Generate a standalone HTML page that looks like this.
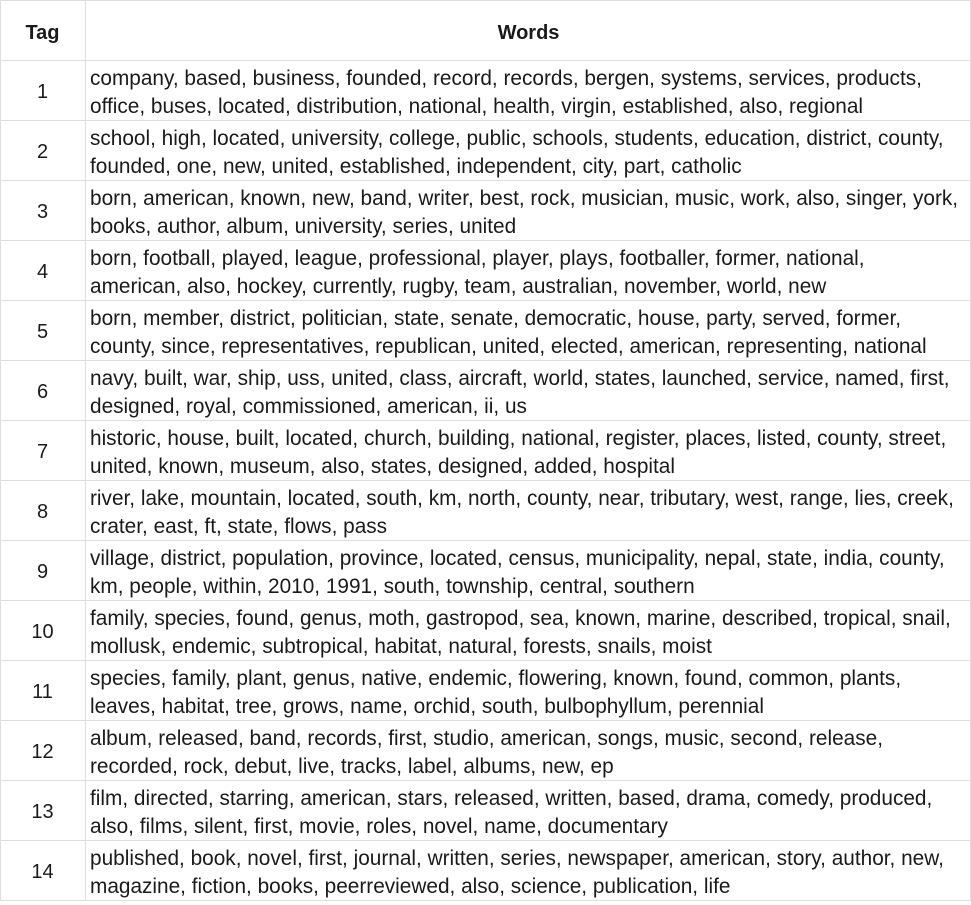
<!DOCTYPE html>
<html><head><meta charset="utf-8"><style>
html,body{margin:0;padding:0;background:#fff;}
body{width:971px;height:901px;overflow:hidden;position:relative;font-family:"Liberation Sans","Noto Sans CJK SC",sans-serif;color:#1a1a1a;}
.h{position:absolute;left:0;width:971px;height:1px;background:#dedede;}
.v{position:absolute;top:0;height:901px;width:1px;background:#dedede;}
.r{position:absolute;left:0;width:971px;height:60px;}
.t{position:absolute;left:0;width:85px;top:0;height:60px;line-height:65px;text-align:center;font-size:20px;}
.w{position:absolute;left:90px;top:5px;font-size:20.8px;line-height:28px;white-space:nowrap;}
.hd{font-weight:bold;font-size:20px;line-height:67px;}
</style></head><body>
<div class="h" style="top:0"></div><div class="h" style="top:60px"></div><div class="h" style="top:120px"></div><div class="h" style="top:180px"></div><div class="h" style="top:240px"></div><div class="h" style="top:300px"></div><div class="h" style="top:360px"></div><div class="h" style="top:420px"></div><div class="h" style="top:480px"></div><div class="h" style="top:540px"></div><div class="h" style="top:600px"></div><div class="h" style="top:660px"></div><div class="h" style="top:720px"></div><div class="h" style="top:780px"></div><div class="h" style="top:840px"></div><div class="h" style="top:900px"></div>
<div class="v" style="left:0"></div><div class="v" style="left:85px"></div><div class="v" style="left:970px"></div>
<div class="r" style="top:0"><div class="t hd">Tag</div><div class="hd" style="position:absolute;left:86px;width:885px;text-align:center;top:0">Words</div></div>
<div class="r" style="top:60px"><div class="t">1</div><div class="w">company, based, business, founded, record, records, bergen, systems, services, products,<br>office, buses, located, distribution, national, health, virgin, established, also, regional</div></div>
<div class="r" style="top:120px"><div class="t">2</div><div class="w">school, high, located, university, college, public, schools, students, education, district, county,<br>founded, one, new, united, established, independent, city, part, catholic</div></div>
<div class="r" style="top:180px"><div class="t">3</div><div class="w">born, american, known, new, band, writer, best, rock, musician, music, work, also, singer, york,<br>books, author, album, university, series, united</div></div>
<div class="r" style="top:240px"><div class="t">4</div><div class="w">born, football, played, league, professional, player, plays, footballer, former, national,<br>american, also, hockey, currently, rugby, team, australian, november, world, new</div></div>
<div class="r" style="top:300px"><div class="t">5</div><div class="w">born, member, district, politician, state, senate, democratic, house, party, served, former,<br>county, since, representatives, republican, united, elected, american, representing, national</div></div>
<div class="r" style="top:360px"><div class="t">6</div><div class="w">navy, built, war, ship, uss, united, class, aircraft, world, states, launched, service, named, first,<br>designed, royal, commissioned, american, ii, us</div></div>
<div class="r" style="top:420px"><div class="t">7</div><div class="w">historic, house, built, located, church, building, national, register, places, listed, county, street,<br>united, known, museum, also, states, designed, added, hospital</div></div>
<div class="r" style="top:480px"><div class="t">8</div><div class="w">river, lake, mountain, located, south, km, north, county, near, tributary, west, range, lies, creek,<br>crater, east, ft, state, flows, pass</div></div>
<div class="r" style="top:540px"><div class="t">9</div><div class="w">village, district, population, province, located, census, municipality, nepal, state, india, county,<br>km, people, within, 2010, 1991, south, township, central, southern</div></div>
<div class="r" style="top:600px"><div class="t">10</div><div class="w">family, species, found, genus, moth, gastropod, sea, known, marine, described, tropical, snail,<br>mollusk, endemic, subtropical, habitat, natural, forests, snails, moist</div></div>
<div class="r" style="top:660px"><div class="t">11</div><div class="w">species, family, plant, genus, native, endemic, flowering, known, found, common, plants,<br>leaves, habitat, tree, grows, name, orchid, south, bulbophyllum, perennial</div></div>
<div class="r" style="top:720px"><div class="t">12</div><div class="w">album, released, band, records, first, studio, american, songs, music, second, release,<br>recorded, rock, debut, live, tracks, label, albums, new, ep</div></div>
<div class="r" style="top:780px"><div class="t">13</div><div class="w">film, directed, starring, american, stars, released, written, based, drama, comedy, produced,<br>also, films, silent, first, movie, roles, novel, name, documentary</div></div>
<div class="r" style="top:840px"><div class="t">14</div><div class="w">published, book, novel, first, journal, written, series, newspaper, american, story, author, new,<br>magazine, fiction, books, peerreviewed, also, science, publication, life</div></div>
</body></html>
